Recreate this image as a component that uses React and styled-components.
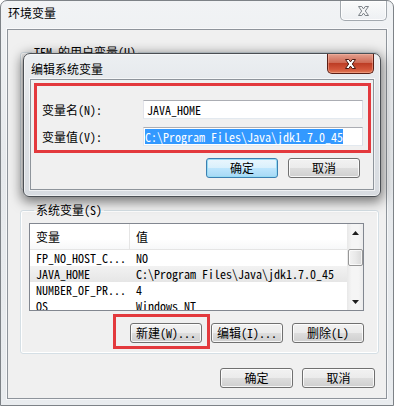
import React from 'react'
import styled, { createGlobalStyle } from 'styled-components'

const FONT = `"Noto Sans Mono CJK SC", "Noto Sans CJK SC", "Liberation Mono", monospace`

const GlobalStyle = createGlobalStyle`
  html, body {
    margin: 0;
    padding: 0;
    background: #ffffff;
  }
  body {
    font-family: ${FONT};
    font-size: 12px;
    color: #000000;
  }
`

const Window = styled.div`
  position: relative;
  box-sizing: border-box;
  width: 394px;
  height: 406px;
  display: flex;
  flex-direction: column;
  border: 1px solid #7d8287;
  border-radius: 7px 7px 0 0;
  background: linear-gradient(180deg, #f1f3f5 0%, #e6e9ec 40%, #e9ecef 100%);
  overflow: hidden;
`

const TitleBar = styled.div`
  display: flex;
  justify-content: space-between;
  align-items: flex-start;
  flex-shrink: 0;
  height: ${props => props.$height}px;
  padding: 0 6px 0 ${props => props.$indent}px;
`

const TitleText = styled.div`
  margin-top: ${props => props.$top}px;
  line-height: 13px;
  font-size: 12px;
  color: #000;
`

const CloseButton = styled.div`
  box-sizing: border-box;
  width: 47px;
  height: 20px;
  display: flex;
  align-items: center;
  justify-content: center;
  border: 1px solid ${props => (props.$active ? '#5a1f16' : '#a3a9af')};
  border-top: none;
  border-radius: 0 0 5px 5px;
  background: ${props =>
    props.$active
      ? 'linear-gradient(180deg, #e3a08f 0%, #cf6a55 45%, #bd3d25 50%, #d2553a 80%, #e07b55 100%)'
      : 'linear-gradient(180deg, rgba(255,255,255,0.6) 0%, rgba(235,238,241,0.5) 100%)'};
  box-shadow: inset 0 0 0 1px ${props => (props.$active ? 'rgba(255,190,170,0.45)' : 'rgba(255,255,255,0.8)')};
`

const Client = styled.div`
  flex: 1;
  display: flex;
  flex-direction: column;
  margin: 0 6px 6px;
  border: 1px solid #8e949b;
  background: #f0f0f0;
  padding: ${props => props.$padding};
  box-shadow: 0 0 0 1px rgba(255, 255, 255, 0.6);
`

const GroupBox = styled.fieldset`
  box-sizing: border-box;
  width: 359px;
  height: ${props => (props.$height ? `${props.$height}px` : 'auto')};
  margin: ${props => props.$top}px 0 0 0;
  padding: 7px 0 10px 8px;
  border: 1px solid #d5dfe5;
  border-radius: 3px;
  box-shadow: inset 0 0 0 1px #ffffff;
`

const Legend = styled.legend`
  margin-left: ${props => props.$indent}px;
  padding: 0 2px;
  line-height: 12px;
  font-size: 12px;
`

const ListView = styled.div`
  box-sizing: border-box;
  width: 335px;
  height: 88px;
  display: flex;
  border: 1px solid #828790;
  background: #ffffff;
  overflow: hidden;
`

const ListBody = styled.div`
  flex: 1;
  display: flex;
  flex-direction: column;
  overflow: hidden;
`

const HeaderRow = styled.div`
  display: grid;
  grid-template-columns: 100px 1fr;
  flex-shrink: 0;
  height: 25px;
  border-bottom: 1px solid #e5e5e5;
  background: linear-gradient(180deg, #ffffff 0%, #ffffff 60%, #f7f8f9 100%);
`

const HeaderCell = styled.div`
  display: flex;
  align-items: center;
  padding-left: 6px;
  border-right: 1px solid ${props => (props.$last ? 'transparent' : '#e5e5e5')};
`

const Row = styled.div`
  display: grid;
  grid-template-columns: 100px 1fr;
  flex-shrink: 0;
  height: 16px;
  line-height: 16px;
  background: ${props => (props.$selected ? 'linear-gradient(180deg, #f2f2f2, #e6e6e6)' : 'transparent')};
`

const Cell = styled.div`
  padding-left: 6px;
  white-space: nowrap;
  overflow: hidden;
`

const ScrollBar = styled.div`
  width: 16px;
  display: flex;
  flex-direction: column;
  align-items: center;
  background: linear-gradient(90deg, #e8e8e8 0%, #f5f5f5 30%, #f5f5f5 70%, #ececec 100%);
`

const ScrollArrow = styled.div`
  width: 16px;
  height: 17px;
  display: flex;
  align-items: center;
  justify-content: center;
  flex-shrink: 0;
`

const ScrollTrack = styled.div`
  flex: 1;
  padding-top: 8px;
`

const ScrollThumb = styled.div`
  box-sizing: border-box;
  width: 15px;
  height: 17px;
  border: 1px solid #979797;
  border-radius: 2px;
  background: linear-gradient(90deg, #f3f3f3 0%, #e9e9e9 50%, #d9d9d9 100%);
  box-shadow: inset 0 0 0 1px rgba(255, 255, 255, 0.7);
`

const ButtonRow = styled.div`
  display: flex;
  justify-content: flex-end;
  gap: ${props => props.$gap}px;
  width: ${props => (props.$width ? `${props.$width}px` : 'auto')};
  margin-top: ${props => props.$top}px;
  padding-right: ${props => props.$right || 0}px;
`

const Button = styled.button`
  box-sizing: border-box;
  width: ${props => props.$width}px;
  height: 20px;
  padding: 0;
  font-family: ${FONT};
  font-size: 12px;
  line-height: 18px;
  color: #000;
  border: 1px solid ${props => (props.$primary ? '#3c7fb1' : '#707070')};
  border-radius: 3px;
  background: ${props =>
    props.$primary
      ? 'linear-gradient(180deg, #eaf6fd 0%, #d9f0fc 50%, #bee6fd 51%, #a7d9f5 100%)'
      : 'linear-gradient(180deg, #f2f2f2 0%, #ebebeb 50%, #dddddd 51%, #cfcfcf 100%)'};
  box-shadow: inset 0 0 0 1px ${props => (props.$primary ? '#97dcf4' : 'rgba(255,255,255,0.8)')};
`

const Marked = styled.div`
  position: relative;
`

const RedMark = styled.div`
  position: absolute;
  box-sizing: border-box;
  left: -17px;
  top: -9px;
  width: 97px;
  height: 35px;
  border: 3px solid #e3393d;
  pointer-events: none;
`

const EditWindow = styled.div`
  position: absolute;
  left: 22px;
  top: 52px;
  box-sizing: border-box;
  width: 358px;
  height: 144px;
  display: flex;
  flex-direction: column;
  border: 1px solid #4b4f54;
  border-radius: 7px 7px 6px 6px;
  background: linear-gradient(180deg, #eceff2 0%, #dde1e5 45%, #d8dce1 100%);
  box-shadow: 0 3px 12px 2px rgba(0, 0, 0, 0.5), inset 0 0 0 1px rgba(255, 255, 255, 0.55);
`

const FieldsBox = styled.div`
  display: grid;
  grid-template-columns: 101px 220px;
  row-gap: 8px;
  align-items: center;
  width: 337px;
  box-sizing: border-box;
  padding: 14px 4px 4px 5px;
  border: 3px solid #e3393d;
`

const FieldLabel = styled.div`
  line-height: 19px;
`

const TextInput = styled.div`
  box-sizing: border-box;
  height: 19px;
  display: flex;
  align-items: center;
  padding: 0 3px;
  border: 1px solid;
  border-color: #abadb3 #dbdfe6 #e3e9ef #e2e3ea;
  background: #ffffff;
  white-space: nowrap;
  overflow: hidden;
`

const Selected = styled.span`
  margin-left: -2px;
  line-height: 15px;
  background: #3399ff;
  color: #ffffff;
`

const CloseGlyph = ({ active }) => (
  <svg width="13" height="12" viewBox="0 0 13 12">
    <polygon
      points="1.5,1.5 4.8,1.5 6.5,3.9 8.2,1.5 11.5,1.5 8.3,6 11.5,10.5 8.2,10.5 6.5,8.1 4.8,10.5 1.5,10.5 4.7,6"
      fill={active ? '#ffffff' : '#f4f5f6'}
      stroke={active ? '#4a1a12' : '#7c8288'}
      strokeWidth="1"
      strokeLinejoin="round"
    />
  </svg>
)

const Arrow = ({ up }) => (
  <svg width="7" height="4" viewBox="0 0 7 4">
    <polygon points={up ? '0,4 3.5,0 7,4' : '0,0 3.5,4 7,0'} fill="#1e1e1e" />
  </svg>
)

const variables = [
  { name: 'FP_NO_HOST_C...', value: 'NO' },
  { name: 'JAVA_HOME', value: 'C:\\Program Files\\Java\\jdk1.7.0_45', selected: true },
  { name: 'NUMBER_OF_PR...', value: '4' },
  { name: 'OS', value: 'Windows_NT' },
]

export default function App() {
  return (
    <>
      <GlobalStyle />
      <Window>
        <TitleBar $height={28} $indent={7}>
          <TitleText $top={5}>环境变量</TitleText>
          <CloseButton>
            <CloseGlyph />
          </CloseButton>
        </TitleBar>
        <Client $padding="16px 7px 0 12px">
          <GroupBox $top={0} $height={144}>
            <Legend $indent={3}>TEM 的用户变量(U)</Legend>
          </GroupBox>
          <GroupBox $top={14}>
            <Legend $indent={5}>系统变量(S)</Legend>
            <ListView>
              <ListBody>
                <HeaderRow>
                  <HeaderCell>变量</HeaderCell>
                  <HeaderCell $last>值</HeaderCell>
                </HeaderRow>
                {variables.map(v => (
                  <Row key={v.name} $selected={v.selected}>
                    <Cell>{v.name}</Cell>
                    <Cell>{v.value}</Cell>
                  </Row>
                ))}
              </ListBody>
              <ScrollBar>
                <ScrollArrow>
                  <Arrow up />
                </ScrollArrow>
                <ScrollTrack>
                  <ScrollThumb />
                </ScrollTrack>
                <ScrollArrow>
                  <Arrow />
                </ScrollArrow>
              </ScrollBar>
            </ListView>
            <ButtonRow $gap={9} $top={12} $width={335}>
              <Marked>
                <Button $width={72}>新建(W)...</Button>
                <RedMark />
              </Marked>
              <Button $width={72}>编辑(I)...</Button>
              <Button $width={72}>删除(L)</Button>
            </ButtonRow>
          </GroupBox>
          <ButtonRow $gap={9} $top={14} $right={4}>
            <Button $width={73}>确定</Button>
            <Button $width={73}>取消</Button>
          </ButtonRow>
        </Client>

        <EditWindow>
          <TitleBar $height={25} $indent={7}>
            <TitleText $top={8}>编辑系统变量</TitleText>
            <CloseButton $active>
              <CloseGlyph active />
            </CloseButton>
          </TitleBar>
          <Client $padding="3px">
            <FieldsBox>
              <FieldLabel>变量名(N):</FieldLabel>
              <TextInput>JAVA_HOME</TextInput>
              <FieldLabel>变量值(V):</FieldLabel>
              <TextInput>
                <Selected>C:\Program Files\Java\jdk1.7.0_45</Selected>
              </TextInput>
            </FieldsBox>
            <ButtonRow $gap={10} $top={5} $right={10}>
              <Button $width={72} $primary>确定</Button>
              <Button $width={72}>取消</Button>
            </ButtonRow>
          </Client>
        </EditWindow>
      </Window>
    </>
  )
}
